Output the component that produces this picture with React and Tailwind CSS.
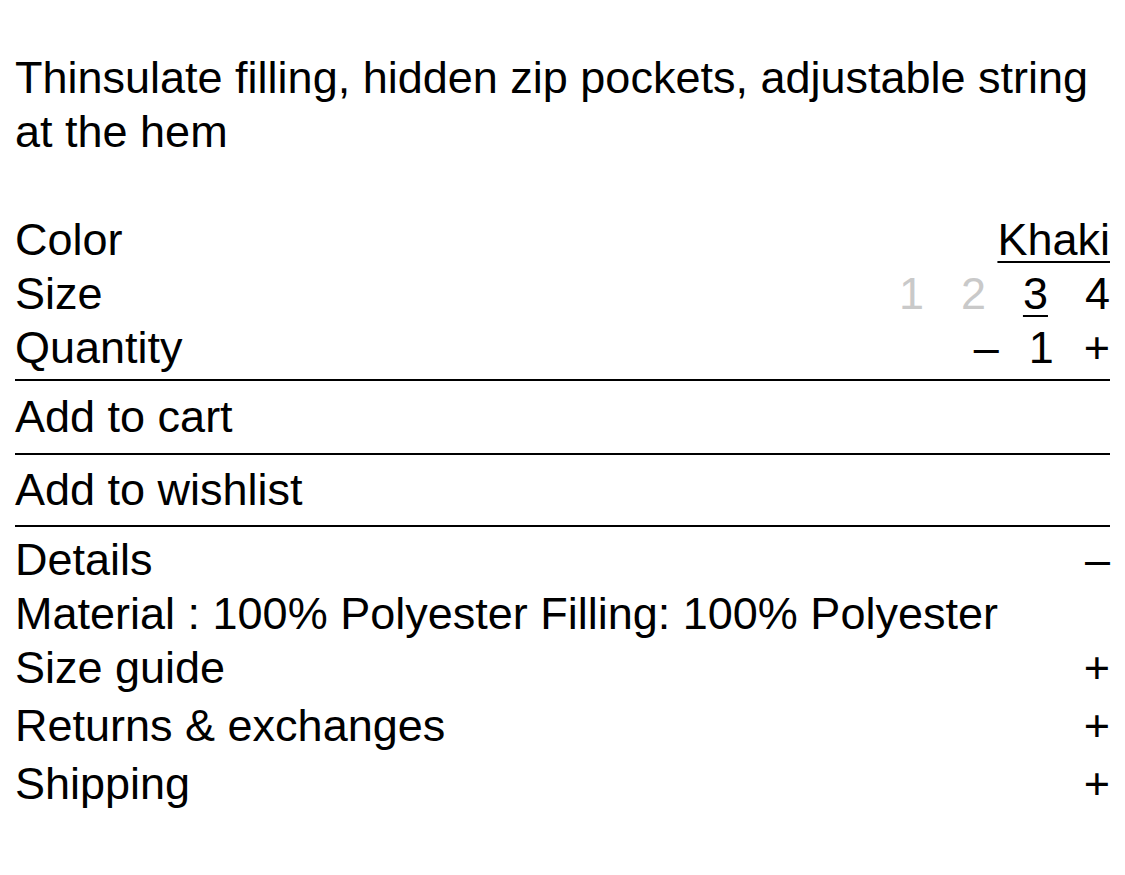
const SIZES = [
  { label: '1', state: 'off' },
  { label: '2', state: 'off' },
  { label: '3', state: 'selected' },
  { label: '4', state: 'on' },
]

const SECTIONS = [
  { title: 'Details', open: true, body: 'Material : 100% Polyester Filling: 100% Polyester' },
  { title: 'Size guide', open: false },
  { title: 'Returns & exchanges', open: false },
  { title: 'Shipping', open: false },
]

function OptionRow({ label, children }) {
  return (
    <div className="flex items-center justify-between">
      <span>{label}</span>
      <div className="flex items-center">{children}</div>
    </div>
  )
}

export default function App() {
  return (
    <div className="min-h-screen bg-white text-black px-[15px] pt-[51px] pb-10 font-['Liberation_Sans',Arial,sans-serif] text-[45px] leading-[54px]">
      <p>Thinsulate filling, hidden zip pockets, adjustable string at the hem</p>

      {/* Options */}
      <div className="mt-[54px] pb-[4px]">
        <OptionRow label="Color">
          <button className="underline decoration-2 underline-offset-[6px]">Khaki</button>
        </OptionRow>
        <OptionRow label="Size">
          <div className="flex gap-[37px]">
            {SIZES.map(s => (
              <button
                key={s.label}
                className={
                  s.state === 'off'
                    ? 'text-[#c9c9c9]'
                    : s.state === 'selected'
                    ? 'underline decoration-2 underline-offset-[6px]'
                    : ''
                }
              >
                {s.label}
              </button>
            ))}
          </div>
        </OptionRow>
        <OptionRow label="Quantity">
          <div className="flex gap-[30px]">
            <button>–</button>
            <span>1</span>
            <button>+</button>
          </div>
        </OptionRow>
      </div>

      <button className="block w-full text-left border-t-2 border-black py-[9px]">Add to cart</button>
      <button className="block w-full text-left border-t-2 border-black py-[8px]">Add to wishlist</button>

      {/* Accordion */}
      <div className="border-t-2 border-black pt-[6px]">
        {SECTIONS.map(s => (
          <div key={s.title} className={s.open ? '' : 'pb-[4px]'}>
            <div className="flex items-center justify-between">
              <span>{s.title}</span>
              <span>{s.open ? '–' : '+'}</span>
            </div>
            {s.open && <p>{s.body}</p>}
          </div>
        ))}
      </div>
    </div>
  )
}
